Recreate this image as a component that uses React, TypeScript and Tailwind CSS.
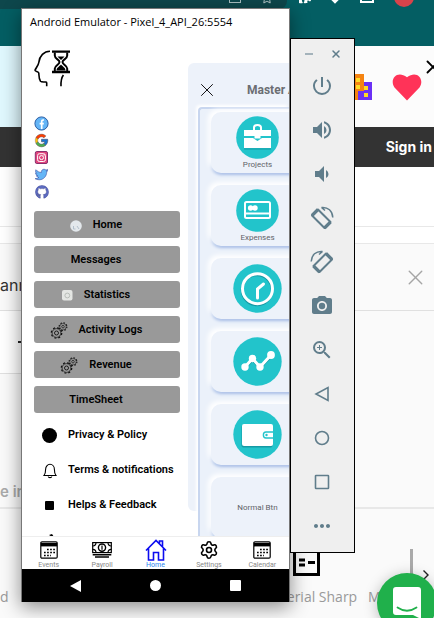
import React from "react";
import {
  MdCameraAlt,
  MdMoreHoriz,
  MdPowerSettingsNew,
  MdVolumeDown,
  MdVolumeUp,
  MdZoomIn,
} from "react-icons/md";
import { FcGoogle } from "react-icons/fc";
import { FaGithub, FaPuzzlePiece, FaRegStar, FaTwitter } from "react-icons/fa";
import { Settings, X } from "lucide-react";

function HeadLogo() {
  return (
    <svg viewBox="0 0 36 37" className="h-[37px] w-9" fill="none" stroke="#000" strokeWidth="1.6">
      <path d="M16 1.2C10 1.2 5.5 6 4.8 12.5C4.6 15 1.5 18.5 1 20.3C1 21.6 4.6 21.4 4.8 23C5 26 4.8 29 6.5 31.3C8 32.8 12.7 31 12.7 33V36.2" />
      <path d="M29.4 25C27.5 27.5 26.8 31 27 36.2" />
      <path d="M18 1.6H36M18 22H36" strokeWidth="2.4" />
      <path d="M20.8 2.5V5.5C20.8 9 25.5 9.5 25.5 12S20.8 15.5 20.8 18.5V21M33.2 2.5V5.5C33.2 9 28.5 9.5 28.5 12S33.2 15.5 33.2 18.5V21" strokeWidth="2" />
      <path d="M23.5 6.5H30.5L27 10ZM22.5 20.5C22.5 17.5 25.5 16.5 27 14.5C28.5 16.5 31.5 17.5 31.5 20.5Z" fill="#000" stroke="none" />
    </svg>
  );
}

function Facebook() {
  return (
    <svg viewBox="0 0 15 15" className="size-[15px]">
      <circle cx="7.5" cy="7.5" r="6.6" fill="#64b5f6" stroke="#2c5fa5" strokeWidth="1" />
      <path d="M7.7 13V5.8C7.7 4.3 8.5 3.9 10 4M5.6 7.6H9.8" stroke="#fff" strokeWidth="1.7" fill="none" />
    </svg>
  );
}

function Instagram() {
  return (
    <svg viewBox="0 0 15 15" className="size-[15px]" fill="none">
      <rect x="1.3" y="1.5" width="12.2" height="12" rx="1.5" fill="#e0447c" stroke="#8a2f6d" />
      <rect x="3.6" y="3.7" width="7.8" height="7.8" rx="1.8" stroke="#fff" />
      <circle cx="7.5" cy="7.6" r="2" stroke="#fff" />
      <circle cx="10" cy="5" r=".7" fill="#fff" />
    </svg>
  );
}

const socials = [
  { name: "Facebook", icon: <Facebook /> },
  { name: "Google", icon: <FcGoogle className="size-[15px]" stroke="#4a4580" strokeWidth="1" /> },
  { name: "Instagram", icon: <Instagram /> },
  { name: "Twitter", icon: <FaTwitter className="size-[13px] text-[#64b5f6]" stroke="#3f51a5" strokeWidth="24" /> },
  { name: "GitHub", icon: <FaGithub className="size-[14px] rounded-full bg-white text-[#5c6bc0]" stroke="#3d3f84" strokeWidth="14" /> },
];

function Gears() {
  return (
    <svg viewBox="0 0 18 18" className="size-[18px]" fill="none" stroke="#111">
      <circle cx="6.5" cy="11" r="5.2" strokeWidth="1.3" strokeDasharray="2 2.080" />
      <circle cx="6.5" cy="11" r="4.4" strokeWidth=".7" />
      <circle cx="6.5" cy="11" r="2" strokeWidth=".9" />
      <circle cx="13" cy="4.7" r="3.9" strokeWidth="1.1" strokeDasharray="1.5 1.560" />
      <circle cx="13" cy="4.7" r="3.2" strokeWidth=".5" />
      <circle cx="13" cy="4.7" r="1.3" strokeWidth=".7" />
    </svg>
  );
}

const drawerButtons = [
  {
    label: "Home",
    icon: (
      <svg viewBox="0 0 12 12" className="size-3">
        <circle cx="6" cy="6" r="5.8" fill="#e3e8ec" />
        <path d="M3.5 6v3M3.5 9h2M7 6l2 3" stroke="#b3c0cc" fill="none" />
      </svg>
    ),
  },
  { label: "Messages", icon: null },
  {
    label: "Statistics",
    icon: (
      <svg viewBox="0 0 11 11" className="size-[11px]">
        <rect width="10.5" height="10.5" rx="2" fill="#e4e6e3" />
        <circle cx="5.3" cy="5.5" r="2.4" stroke="#b8bdb8" fill="none" />
      </svg>
    ),
  },
  { label: "Activity Logs", icon: <Gears /> },
  { label: "Revenue", icon: <Gears /> },
  { label: "TimeSheet", icon: null },
];

const drawerLinks = [
  { id: "privacy", label: "Privacy & Policy", icon: <span className="size-[15px] rounded-full bg-black" /> },
  {
    id: "terms",
    label: "Terms & notifications",
    icon: (
      <svg viewBox="0 0 14 16" className="h-4 w-3.5" fill="none" stroke="#000" strokeWidth="1.1">
        <path d="M1 12.5C2.3 11 2.6 9.5 2.6 6.5C2.6 3.5 4.5 1.3 7 1.3S11.4 3.5 11.4 6.5C11.4 9.5 11.7 11 13 12.5Z" />
        <path d="M5.2 13.5C5.5 15 8.5 15 8.8 13.5" />
      </svg>
    ),
  },
  { id: "help", label: "Helps & Feedback", icon: <span className="size-[9px] rounded-[1px] bg-black" /> },
  {
    id: "more",
    label: "",
    icon: (
      <svg viewBox="0 0 14 14" className="size-3.5" fill="#000">
        <path d="M6 1L9 0L11 3V13H3V5H9V3Z" />
      </svg>
    ),
  },
];

const cards = [
  {
    label: "Projects",
    icon: (
      <svg viewBox="0 0 43 43" className="size-[43px]">
        <circle cx="21.5" cy="21.5" r="21.3" fill="#22c4cb" />
        <path d="M8 14H35V20H24.5V22.5H18.5V20H8Z" fill="#fff" />
        <path d="M8 22H17L21.5 25L26 22H35V32H8Z" fill="#fff" />
        <path d="M18 14V11.5C18 8 25 8 25 11.5V14" stroke="#fff" strokeWidth="2" fill="none" />
        <path d="M8 33H35" stroke="#159aa5" strokeWidth="1" />
      </svg>
    ),
  },
  {
    label: "Expenses",
    icon: (
      <svg viewBox="0 0 43 43" className="size-[43px]">
        <circle cx="21.5" cy="21.5" r="21.3" fill="#22c4cb" />
        <rect x="9" y="13" width="25" height="16" rx="1.5" fill="none" stroke="#fff" strokeWidth="2" />
        <path d="M9 24.5H34" stroke="#fff" strokeWidth="2" />
        <circle cx="14.6" cy="19" r="2.7" fill="#fff" />
        <circle cx="19" cy="19" r="2.7" fill="#fff" />
      </svg>
    ),
  },
  {
    label: "",
    icon: (
      <svg viewBox="0 0 49 49" className="size-[49px]" fill="none">
        <circle cx="24.5" cy="24.5" r="24.2" fill="#22c4cb" />
        <circle cx="24" cy="26" r="15" stroke="#159aa5" strokeWidth="2.5" />
        <circle cx="24.5" cy="24.7" r="15" stroke="#fff" strokeWidth="3" />
        <path d="M30.5 20L24.5 25V34" stroke="#fff" strokeWidth="3" strokeLinecap="round" />
      </svg>
    ),
  },
  {
    label: "",
    icon: (
      <svg viewBox="0 0 49 49" className="size-[49px]" fill="none">
        <circle cx="24.5" cy="24.5" r="24.2" fill="#22c4cb" />
        <path d="M12 31.5L19.5 23L27 31L38 19.5" stroke="#159aa5" strokeWidth="2.5" />
        <path d="M12 30L19.5 21.5L27 30L38 18" stroke="#fff" strokeWidth="3" />
        <g fill="#fff">
          <circle cx="12" cy="30" r="3.7" />
          <circle cx="19.5" cy="21.5" r="3.7" />
          <circle cx="27" cy="30" r="3.7" />
          <circle cx="38" cy="18" r="3.9" />
        </g>
      </svg>
    ),
  },
  {
    label: "",
    icon: (
      <svg viewBox="0 0 49 49" className="size-[49px]" fill="none">
        <circle cx="24.5" cy="24.5" r="24.2" fill="#22c4cb" />
        <rect x="8.5" y="15" width="31" height="22.5" rx="2" fill="#159aa5" />
        <rect x="9" y="14" width="31" height="22" rx="2" fill="#fff" />
        <path d="M40 22H33C29.5 22 29.5 28 33 28H40" stroke="#22c4cb" strokeWidth="1.4" />
        <circle cx="33.5" cy="25" r="1.2" fill="#22c4cb" />
      </svg>
    ),
  },
  { label: "Normal Btn", icon: null },
];

function CalendarIcon() {
  return (
    <svg viewBox="0 0 18 18" className="size-[18px]" fill="none" stroke="#000">
      <rect x=".8" y=".8" width="16.4" height="16.4" rx="1.2" strokeWidth="1.2" />
      <path d="M1 3.7H17" strokeWidth="3.4" />
      <path d="M7 8.5H15M4 11.5H15M4 14.5H11" strokeWidth="1.7" strokeDasharray="1.7 1.4" />
    </svg>
  );
}

const tabs = [
  { label: "Events", icon: <CalendarIcon /> },
  {
    label: "Payroll",
    icon: (
      <svg viewBox="0 0 20 18" className="h-[18px] w-5" fill="none" stroke="#000" strokeWidth="1.2">
        <rect x=".7" y="1.6" width="18.6" height="10" />
        <path d="M.7 5C3 5 4 4 4 1.6M19.3 5C17 5 16 4 16 1.6M.7 8.4C3 8.4 4 9.4 4 11.6M19.3 8.4C17 8.4 16 9.4 16 11.6" />
        <circle cx="10" cy="6.6" r="3.6" strokeWidth="1.4" />
        <path d="M10 4.5V8.8" />
        <path d="M.7 13.7H19.3M3 16H17" strokeWidth="1.5" />
      </svg>
    ),
  },
  {
    label: "Home",
    active: true,
    icon: (
      <svg viewBox="0 0 22 22" className="size-[22px]" fill="none" stroke="#0c0cf0" strokeWidth="1.6">
        <path d="M1 11.5L11 1.5L21 11.5M3.5 9.5V21H8.5V13.5H13.5V21H18.5V9.5M14.5 5V2H17.5V8" />
      </svg>
    ),
  },
  { label: "Settings", icon: <Settings size={20} strokeWidth={1.9} color="#000" /> },
  { label: "Calendar", icon: <CalendarIcon /> },
];

function RotateIcon({ flip = false }: { flip?: boolean }) {
  return (
    <svg viewBox="0 0 24 24" className={flip ? "size-6 -scale-x-100" : "size-6"} fill="none" stroke="#607d8b">
      <path d="M8 3.5L20.500 16L14.500 22L2 9.500Z" strokeWidth="2" strokeLinejoin="round" />
      <path d="M2 9.500L8 3.500M20.500 16L14.500 22" strokeWidth="3.200" />
      <path d="M11.500 1.500C18 .8 22.500 5 22.800 11.500M11.500 1.500L15 4.500" strokeWidth="1.500" />
    </svg>
  );
}

const controls = [
  { name: "Power", icon: <MdPowerSettingsNew className="size-6" /> },
  { name: "Volume up", icon: <MdVolumeUp className="size-6" /> },
  { name: "Volume down", icon: <MdVolumeDown className="size-6" /> },
  { name: "Rotate left", icon: <RotateIcon /> },
  { name: "Rotate right", icon: <RotateIcon flip /> },
  { name: "Take screenshot", icon: <MdCameraAlt className="size-6" /> },
  { name: "Zoom", icon: <MdZoomIn className="size-6" /> },
  {
    name: "Back",
    icon: (
      <svg viewBox="0 0 16 16" className="size-4" fill="none" stroke="currentColor" strokeWidth="1.6">
        <path d="M14 1.5V14.5L2 8Z" />
      </svg>
    ),
  },
  {
    name: "Home",
    icon: (
      <svg viewBox="0 0 16 16" className="size-4" fill="none" stroke="currentColor" strokeWidth="1.6">
        <circle cx="8" cy="8" r="6.5" />
      </svg>
    ),
  },
  {
    name: "Overview",
    icon: (
      <svg viewBox="0 0 16 16" className="size-4" fill="none" stroke="currentColor" strokeWidth="1.6">
        <rect x="1.5" y="1.5" width="13" height="13" rx=".5" />
      </svg>
    ),
  },
  { name: "More", icon: <MdMoreHoriz className="size-6" /> },
];

function BackgroundPage() {
  return (
    <div className="flex h-full flex-col bg-[#fafafa] font-['Inter',sans-serif]">
      <div className="h-[46px] shrink-0 bg-[#045e63]">
        <div className="flex h-[9px] overflow-hidden">
          <div className="flex h-[9px] w-[287px] items-end justify-end gap-5 rounded-br-lg bg-[#0e474c] pr-[14px] text-[#a9bfc1]">
            <span className="mb-[6px] h-2 w-3 border-x border-b border-current" />
            <FaRegStar className="mb-[5px] size-3" />
          </div>
          <div className="flex flex-1 items-end justify-between pr-5 pl-3 text-white">
            <FaPuzzlePiece className="mb-[5px] size-3" />
            <span className="mb-[7px] size-2 rotate-45 bg-current" />
            <span className="mb-[6px] h-2 w-3.5 border-2 border-current" />
            <span className="mb-[2px] size-5 rounded-full bg-[#d8434b]" />
          </div>
        </div>
      </div>
      <div className="flex h-[81px] shrink-0">
        <div className="w-1/2 bg-[#e0f8fe]" />
        <div className="flex flex-1 items-center justify-end gap-5 bg-[#fcfcfc]">
          <svg viewBox="0 0 24 28" className="h-7 w-6">
            <path d="M0 1H16V27H0Z" fill="#f58412" />
            <path d="M16 9H24V27H10V18H16Z" fill="#6b30f5" />
            <path d="M8 5H12V9H8ZM8 12H12V16H8ZM16 13H20V17H16ZM16 20H20V24H16Z" fill="#fddb27" />
          </svg>
          <svg viewBox="0 0 30 27" className="h-7 w-[30px]">
            <path d="M15 27L2.500 14C-3 6 5-4 15 3.800C25-4 33 6 27.500 14Z" fill="#ff3358" />
          </svg>
          <button aria-label="Close banner" className="-ml-5 w-3 self-start overflow-hidden pt-[10px]">
            <X size={22} strokeWidth={2} />
          </button>
        </div>
      </div>
      <div className="flex h-10 shrink-0 items-center justify-end bg-[#333] pr-[2px]">
        <a href="#signin" className="text-sm font-bold text-white">Sign in</a>
      </div>
      <div className="h-[60px] shrink-0 border-b border-[#e8e8e8] bg-white" />
      <div className="h-[17px] shrink-0 border-b border-[#e8e8e8] bg-white" />
      <div className="flex h-[67px] shrink-0 items-center justify-between border-b border-[#e0e0e0]">
        <span className="pt-4 text-base text-[#333]">ann</span>
        <button aria-label="Dismiss" className="mr-[6px] text-[#a5a5a5]">
          <X size={25} strokeWidth={1.3} />
        </button>
      </div>
      <div className="flex h-[63px] shrink-0">
        <div className="w-1/2 border-b border-[#e0e0e0] bg-white pt-[30px] pl-[18px]">
          <div className="h-[2px] w-3 bg-[#222]" />
        </div>
      </div>
      <div className="flex h-[135px] shrink-0 items-end border-b-2 border-[#e8e8e8] pb-[3px]">
        <span className="text-[15px] leading-6 font-semibold text-[#aaa]">e in</span>
      </div>
      <div className="flex flex-1 flex-col font-['Open_Sans',sans-serif] text-sm text-[#999]">
        <div className="flex h-[68px] items-end justify-between pr-1 pl-[293px]">
          <svg viewBox="0 0 27 27" className="size-[27px]" fill="none" stroke="#000">
            <rect x="1.5" y="1.5" width="24" height="23" strokeWidth="3" />
            <path d="M6 10H12M6 15H12M15 12.5H22" strokeWidth="3" />
          </svg>
          <div className="flex items-end gap-[9px]">
            <span className="h-7 w-[3px] bg-[#aaa]" />
            <svg viewBox="0 0 8 12" className="-mb-1 h-3 w-2" fill="none" stroke="#222" strokeWidth="1.4">
              <path d="M1.500 1.500L6 6L1.500 10.500" />
            </svg>
          </div>
        </div>
        <div className="flex pt-2 leading-6">
          <span className="w-[274px]">d</span>
          <span className="w-[94px] whitespace-nowrap">aterial Sharp</span>
          <span>Material</span>
        </div>
      </div>
    </div>
  );
}

function Drawer() {
  return (
    <nav className="w-[166px] shrink-0 pt-[14px] pr-2 pl-3">
      <HeadLogo />
      <ul className="mt-[29px] flex flex-col gap-[2px]">
        {socials.map((s) => (
          <li key={s.name}>
            <a href={"#" + s.name} aria-label={s.name} className="flex size-[15px] items-center justify-center">
              {s.icon}
            </a>
          </li>
        ))}
      </ul>
      <div className="mt-3 flex flex-col gap-2">
        {drawerButtons.map((b) => (
          <button
            key={b.label}
            className="flex h-[27px] w-full items-center justify-center gap-[11px] rounded-[3px] bg-[#999] pt-[2px] pr-[22px] text-[11px] font-semibold"
          >
            {b.icon}
            {b.label}
          </button>
        ))}
      </div>
      <ul className="mt-[5px]">
        {drawerLinks.map((l) => (
          <li key={l.id}>
            <a
              href={"#" + l.id}
              aria-label={l.label || "More"}
              className="flex h-[35px] items-center gap-[3px] text-[11px] font-semibold whitespace-nowrap"
            >
              <span className="flex w-[31px] justify-center">{l.icon}</span>
              {l.label}
            </a>
          </li>
        ))}
      </ul>
    </nav>
  );
}

function MasterPanel() {
  return (
    <section className="mt-[27px] h-[448px] min-w-0 flex-1 rounded-l-md bg-[#edf2fa]">
      <header className="flex h-11 items-center gap-[29px] pt-[10px] pl-2">
        <button aria-label="Close panel">
          <X size={22} strokeWidth={1} />
        </button>
        <h1 className="text-xs font-bold whitespace-nowrap text-[#6b6e73]">Master App</h1>
      </header>
      <div className="ml-[10px] flex flex-col gap-3 rounded-tl border-t-2 border-l-2 border-[#c8d6ef] bg-[#ebf1fa] pt-[3px] pl-[11px] shadow-[-2px_-2px_3px_#fff]">
        {cards.map((c, i) => (
          <button
            key={i}
            className="flex h-[61px] w-[93px] flex-col items-center justify-center rounded-[10px] bg-[#edf2fa] text-[8px] leading-[11px] text-[#5f6368] shadow-[-3px_-3px_5px_#fff,0_2px_3px_#a5bce6]"
          >
            {c.icon}
            {c.label}
          </button>
        ))}
      </div>
    </section>
  );
}

function EmulatorWindow() {
  return (
    <main className="absolute top-2 left-[21px] flex h-[594px] w-[269px] flex-col border border-b-0 border-[#777] bg-white font-['Roboto',sans-serif] text-black shadow-[0_5px_18px_rgba(0,0,0,0.45)]">
      <div className="flex h-[27px] shrink-0 items-center pl-2 font-['Open_Sans',sans-serif] text-[11px] whitespace-nowrap">
        Android Emulator - Pixel_4_API_26:5554
      </div>
      <div className="flex min-h-0 flex-1 overflow-hidden">
        <Drawer />
        <MasterPanel />
      </div>
      <nav className="relative flex h-[33px] shrink-0 border-t border-[#eee] bg-white">
        {tabs.map((t) => (
          <a
            key={t.label}
            href={"#tab-" + t.label}
            className={
              t.active
                ? "flex flex-1 flex-col items-center justify-end text-[7px] leading-[8px] text-[#2a86f0]"
                : "flex flex-1 flex-col items-center justify-end text-[7px] leading-[8px] text-[#888]"
            }
          >
            <span className="flex h-[22px] items-center">{t.icon}</span>
            {t.label}
          </a>
        ))}
      </nav>
      <div className="flex h-[33px] shrink-0 items-center justify-around bg-black px-[14px] text-white">
        <button aria-label="Android back">
          <svg viewBox="0 0 12 12" className="size-3" fill="currentColor">
            <path d="M11 0V12L0 6Z" />
          </svg>
        </button>
        <button aria-label="Android home" className="size-[11px] rounded-full bg-white" />
        <button aria-label="Android recents" className="size-[11px] rounded-[1px] bg-white" />
      </div>
    </main>
  );
}

function EmulatorToolbar() {
  return (
    <aside className="absolute top-[38px] left-[290px] w-[65px] border border-black bg-[#efefef] pb-1 text-[#607d8b]">
      <div className="flex h-[25px] items-center justify-between pt-1 pr-3 pl-[14px]">
        <button aria-label="Minimize" className="h-[2px] w-2 bg-[#a4b3bb]" />
        <button aria-label="Close">
          <X size={12} strokeWidth={3} />
        </button>
      </div>
      {controls.map((c) => (
        <button key={c.name} aria-label={c.name} className="flex h-11 w-full items-center justify-center pr-[1px]">
          {c.icon}
        </button>
      ))}
    </aside>
  );
}

export default function App() {
  return (
    <div className="relative h-screen overflow-hidden">
      <BackgroundPage />
      <EmulatorWindow />
      <EmulatorToolbar />
      <button
        aria-label="Open chat"
        className="absolute -right-[3px] -bottom-[15px] flex size-[60px] items-center justify-center rounded-full bg-[#20b04b] shadow-[0_2px_14px_rgba(0,0,0,0.25)]"
      >
        <svg viewBox="0 0 28 32" className="h-8 w-7" fill="none">
          <path d="M3 0H25Q28 0 28 3V32L20 28H3Q0 28 0 25V3Q0 0 3 0Z" fill="#fff" />
          <path d="M4.500 20.500Q14 27 23.500 20.500" stroke="#20b04b" strokeWidth="1.800" strokeLinecap="round" />
        </svg>
      </button>
    </div>
  );
}
